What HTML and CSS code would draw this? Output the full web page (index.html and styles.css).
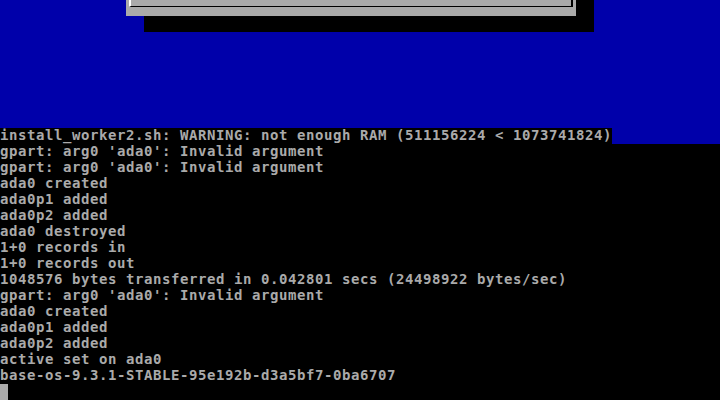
FILE: index.html
```html
<!DOCTYPE html>
<html>
<head>
<meta charset="utf-8">
<link rel="stylesheet" href="styles.css">
</head>
<body>
<div class="screen">
  <div class="top">
    <div class="shadow"></div>
    <div class="dialog"><div class="frame"></div></div>
  </div>
  <div class="console">
    <div class="line first"><span class="ink">install_worker2.sh: WARNING: not enough RAM (511156224 &lt; 1073741824)</span></div>
    <div class="line">gpart: arg0 'ada0': Invalid argument</div>
    <div class="line">gpart: arg0 'ada0': Invalid argument</div>
    <div class="line">ada0 created</div>
    <div class="line">ada0p1 added</div>
    <div class="line">ada0p2 added</div>
    <div class="line">ada0 destroyed</div>
    <div class="line">1+0 records in</div>
    <div class="line">1+0 records out</div>
    <div class="line">1048576 bytes transferred in 0.042801 secs (24498922 bytes/sec)</div>
    <div class="line">gpart: arg0 'ada0': Invalid argument</div>
    <div class="line">ada0 created</div>
    <div class="line">ada0p1 added</div>
    <div class="line">ada0p2 added</div>
    <div class="line">active set on ada0</div>
    <div class="line">base-os-9.3.1-STABLE-95e192b-d3a5bf7-0ba6707</div>
    <div class="line"><span class="cursor"></span></div>
  </div>
</div>
</body>
</html>
```
FILE: styles.css
```css
html, body {
  margin: 0;
  padding: 0;
  background: #000;
}
.screen {
  width: 720px;
  height: 400px;
  overflow: hidden;
  background: #000;
}
.top {
  position: relative;
  height: 128px;
  background: #0000aa;
}
.shadow {
  position: absolute;
  left: 144px;
  top: 0;
  width: 450px;
  height: 32px;
  background: #000;
}
.dialog {
  position: absolute;
  left: 126px;
  top: 0;
  width: 450px;
  height: 16px;
  background: #aaaaaa;
}
.frame {
  position: absolute;
  left: 3px;
  top: 0;
  width: 440px;
  height: 6px;
  border-left: 2px solid #ffffff;
  border-right: 2px solid #000;
  border-bottom: 1px solid #000;
}
.console {
  font-family: "DejaVu Sans Mono", "Liberation Mono", monospace;
  font-size: 14px;
  font-weight: bold;
  letter-spacing: 0.572px;
  line-height: 14px;
  color: #aaaaaa;
}
.line {
  height: 16px;
  white-space: pre;
}
.line.first {
  background: #0000aa;
}
.ink {
  background: #000;
  display: inline-block;
  height: 16px;
  vertical-align: top;
}
.cursor {
  display: inline-block;
  width: 8px;
  height: 16px;
  background: #aaaaaa;
  vertical-align: top;
}
```
